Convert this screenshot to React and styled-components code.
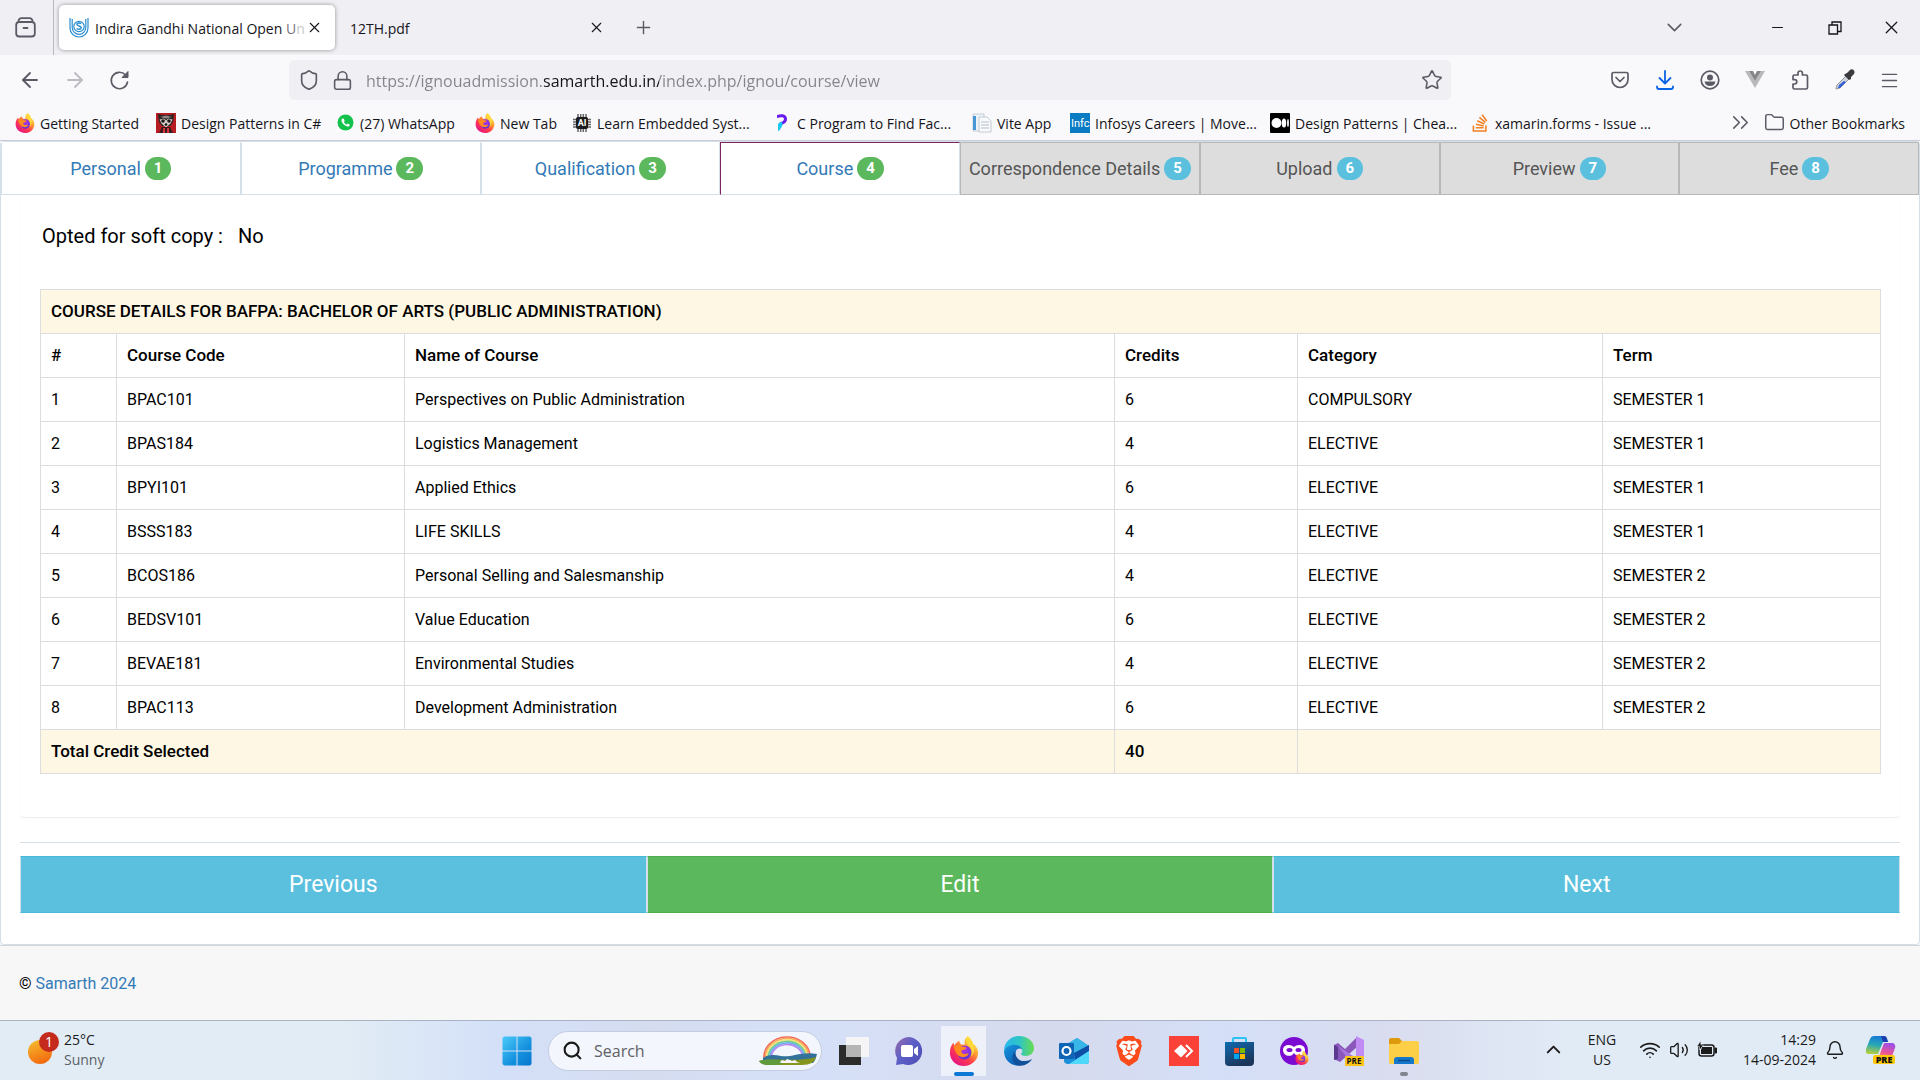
import styled, { createGlobalStyle } from "styled-components";
import {
    ArrowLeft, ArrowRight, Shield, Lock, Star, ChevronDown, ChevronUp, Minus, X, Plus,
    Menu, Folder, ChevronsRight, Search, Wifi, Volume2, Bell
} from "lucide-react";
import { FaStackOverflow } from "react-icons/fa";
import { SiBrave } from "react-icons/si";

const bookmarks = [
    { name: "Getting Started", icon: <FirefoxIcon size={20} />, width: 141 },
    { name: "Design Patterns in C#", icon: <RaccoonIcon />, width: 179 },
    { name: "(27) WhatsApp", icon: <WhatsIcon />, width: 140 },
    { name: "New Tab", icon: <FirefoxIcon size={20} />, width: 97 },
    { name: "Learn Embedded Syst...", icon: <ChipIcon />, width: 200 },
    { name: "C Program to Find Fac...", icon: <ProgramizIcon />, width: 200 },
    { name: "Vite App", icon: <PageIcon />, width: 98 },
    { name: "Infosys Careers | Move...", icon: <InfosysIcon />, width: 200 },
    { name: "Design Patterns | Chea...", icon: <MediumIcon />, width: 200 },
    { name: "xamarin.forms - Issue ...", icon: <FaStackOverflow size={20} color="#f48024" />, width: 200 },
];

const steps = [
    { name: "Personal", done: true },
    { name: "Programme", done: true },
    { name: "Qualification", done: true },
    { name: "Course", done: true, active: true },
    { name: "Correspondence Details" },
    { name: "Upload" },
    { name: "Preview" },
    { name: "Fee" },
];

const courses = [
    ["BPAC101", "Perspectives on Public Administration", 6, "COMPULSORY", "SEMESTER 1"],
    ["BPAS184", "Logistics Management", 4, "ELECTIVE", "SEMESTER 1"],
    ["BPYI101", "Applied Ethics", 6, "ELECTIVE", "SEMESTER 1"],
    ["BSSS183", "LIFE SKILLS", 4, "ELECTIVE", "SEMESTER 1"],
    ["BCOS186", "Personal Selling and Salesmanship", 4, "ELECTIVE", "SEMESTER 2"],
    ["BEDSV101", "Value Education", 6, "ELECTIVE", "SEMESTER 2"],
    ["BEVAE181", "Environmental Studies", 4, "ELECTIVE", "SEMESTER 2"],
    ["BPAC113", "Development Administration", 6, "ELECTIVE", "SEMESTER 2"],
];

export default function App() {
    return (
        <Screen>
            <GlobalStyle />
            <Browser />
            <CoursePage />
            <Taskbar />
        </Screen>
    );
}

function Browser() {
    return (
        <header>
            <TabStrip>
                <IconButton $w={50} aria-label="Recent browsing"><RecentIcon /></IconButton>
                <Divider />
                <Tab $active>
                    <IgnouIcon />
                    <TabTitle>Indira Gandhi National Open <Faded $to="#77767c">U</Faded><Faded $to="#c9c9cc">n</Faded></TabTitle>
                    <IconButton $w={24} $dark aria-label="Close tab"><X size={17} strokeWidth={1.5} /></IconButton>
                </Tab>
                <Tab>
                    <TabTitle>12TH.pdf</TabTitle>
                    <IconButton $w={24} $dark aria-label="Close tab"><X size={17} strokeWidth={1.5} /></IconButton>
                </Tab>
                <IconButton $w={54} aria-label="New tab"><Plus size={21} strokeWidth={1.6} /></IconButton>
                <Spacer />
                <IconButton $w={80} aria-label="List all tabs"><ChevronDown size={25} strokeWidth={1.5} /></IconButton>
                <WindowButtons>
                    <IconButton $w={57} $dark aria-label="Minimize"><Minus size={17} strokeWidth={1.5} /></IconButton>
                    <IconButton $w={57} $dark aria-label="Restore"><RestoreIcon /></IconButton>
                    <IconButton $w={57} $dark aria-label="Close"><X size={21} strokeWidth={1.4} /></IconButton>
                </WindowButtons>
            </TabStrip>

            <NavBar>
                <IconButton $w={45} aria-label="Back"><ArrowLeft size={24} strokeWidth={1.8} /></IconButton>
                <IconButton $w={45} $faded aria-label="Forward"><ArrowRight size={24} strokeWidth={1.8} /></IconButton>
                <IconButton $w={45} aria-label="Reload"><ReloadIcon /></IconButton>
                <UrlBar>
                    <Shield size={22} strokeWidth={1.8} />
                    <Lock size={21} strokeWidth={1.8} />
                    <UrlInput aria-label="Address" defaultValue="https://ignouadmission.samarth.edu.in/index.php/ignou/course/view" />
                    <Star size={22} strokeWidth={1.7} />
                </UrlBar>
                <NavIcons>
                    <IconButton $w={45} aria-label="Save to Pocket"><PocketIcon /></IconButton>
                    <IconButton $w={45} aria-label="Downloads"><DownloadIcon /></IconButton>
                    <IconButton $w={45} aria-label="Account"><AccountIcon /></IconButton>
                    <IconButton $w={45} aria-label="Vue devtools"><VueIcon /></IconButton>
                    <IconButton $w={45} aria-label="Extensions"><PuzzleIcon /></IconButton>
                    <IconButton $w={45} aria-label="Color picker"><DropperIcon /></IconButton>
                    <IconButton $w={45} aria-label="Menu"><Menu size={21} strokeWidth={1.7} /></IconButton>
                </NavIcons>
            </NavBar>

            <BookmarkBar>
                {bookmarks.map((b, i) => (
                    <Bookmark href="#" key={i} $w={b.width}>{b.icon}<span>{b.name}</span></Bookmark>
                ))}
                <Spacer />
                <IconButton $w={46} aria-label="More bookmarks"><ChevronsRight size={27} strokeWidth={1.4} /></IconButton>
                <Bookmark href="#"><Folder size={21} strokeWidth={1.7} /><span>Other Bookmarks</span></Bookmark>
            </BookmarkBar>
        </header>
    );
}

function CoursePage() {
    return (
        <Page>
            <Panel>
                <Steps>
                    {steps.map((s, i) => (
                        <Step href="#" key={s.name} $done={s.done} $active={s.active}>
                            {s.name} <Badge $done={s.done}>{i + 1}</Badge>
                        </Step>
                    ))}
                </Steps>
                <Inner>
                    <Card>
                        <SoftCopy>Opted for soft copy : <span>No</span></SoftCopy>
                        <Table>
                            <colgroup>
                                <Col $w={76} /><Col $w={288} /><Col $w={710} /><Col $w={183} /><Col $w={305} /><Col $w={278} />
                            </colgroup>
                            <thead>
                                <Row $cream>
                                    <th colSpan={6}>COURSE DETAILS FOR BAFPA: BACHELOR OF ARTS (PUBLIC ADMINISTRATION)</th>
                                </Row>
                                <Row>
                                    <th>#</th>
                                    <th>Course Code</th>
                                    <th>Name of Course</th>
                                    <th>Credits</th>
                                    <th>Category</th>
                                    <th>Term</th>
                                </Row>
                            </thead>
                            <tbody>
                                {courses.map((course, i) => (
                                    <Row key={course[0]}>
                                        <td>{i + 1}</td>
                                        {course.map((value, j) => <td key={j}>{value}</td>)}
                                    </Row>
                                ))}
                            </tbody>
                            <tfoot>
                                <Row $cream>
                                    <th colSpan={3}>Total Credit Selected</th>
                                    <th>40</th>
                                    <td colSpan={2}></td>
                                </Row>
                            </tfoot>
                        </Table>
                    </Card>
                    <Actions>
                        <Action>Previous</Action>
                        <Action $green>Edit</Action>
                        <Action>Next</Action>
                    </Actions>
                </Inner>
            </Panel>
            <Footer>© <a href="#">Samarth 2024</a></Footer>
        </Page>
    );
}

function Taskbar() {
    return (
        <Bar>
            <Weather>
                <WeatherIcon />
                <div>
                    <p>25°C</p>
                    <Muted>Sunny</Muted>
                </div>
            </Weather>
            <Apps>
                <AppButton aria-label="Start"><WindowsIcon /></AppButton>
                <SearchBox>
                    <Search size={21} strokeWidth={2.4} />
                    <input aria-label="Search" placeholder="Search" />
                    <RainbowIcon />
                </SearchBox>
                <AppButton aria-label="Task view"><TaskViewIcon /></AppButton>
                <AppButton aria-label="Chat"><ChatIcon /></AppButton>
                <AppButton aria-label="Firefox" $open><FirefoxIcon size={30} /></AppButton>
                <AppButton aria-label="Edge"><EdgeIcon /></AppButton>
                <AppButton aria-label="Outlook"><OutlookIcon /></AppButton>
                <AppButton aria-label="Brave"><BraveIcon /></AppButton>
                <AppButton aria-label="AnyDesk"><AnyDeskIcon /></AppButton>
                <AppButton aria-label="Store"><StoreIcon /></AppButton>
                <AppButton aria-label="Private browsing"><PrivateIcon /></AppButton>
                <AppButton aria-label="Visual Studio"><StudioIcon /></AppButton>
                <AppButton aria-label="File Explorer" $running><ExplorerIcon /></AppButton>
            </Apps>
            <Tray>
                <ChevronUp size={23} strokeWidth={2} />
                <Language>ENG<br />US</Language>
                <TrayIcons>
                    <Wifi size={22} strokeWidth={1.8} />
                    <Volume2 size={20} strokeWidth={1.6} />
                    <BatteryIcon />
                </TrayIcons>
                <Clock>14:29<br />14-09-2024</Clock>
                <Bell size={20} strokeWidth={1.7} />
                <CopilotIcon />
            </Tray>
        </Bar>
    );
}

/* ---------- icons ---------- */

function FirefoxIcon({ size }) {
    return (
        <svg width={size} height={size} viewBox="0 0 32 32">
            <defs>
                <linearGradient id="ffBody" x1="0.85" y1="0.1" x2="0.2" y2="0.95">
                    <stop offset="0" stopColor="#fff44f" />
                    <stop offset="0.35" stopColor="#ff9a2e" />
                    <stop offset="0.65" stopColor="#ff3750" />
                    <stop offset="1" stopColor="#e31587" />
                </linearGradient>
                <radialGradient id="ffGlobe" cx="0.5" cy="0.3" r="0.7">
                    <stop offset="0" stopColor="#b833e1" />
                    <stop offset="1" stopColor="#5b36d6" />
                </radialGradient>
            </defs>
            <path d="M20 0c3 2 5 5 5.500 8 4 3 6 7 5.500 11-.5 7-7 13-15 13S1 26 1 18c0-4 1-8 4-11 0 1 .3 2 1 3 1-2 3-4 5-5 0 2 1 3 2 4l4 0c-1-3 0-7 3-9z" fill="url(#ffBody)" />
            <circle cx="16.500" cy="17.500" r="7.500" fill="url(#ffGlobe)" />
            <path d="M5 11c3-2 6-2 8 0l5 1c1 2-2 3-4 3-1 1-1 3 1 4 2 1 4-1 6 0-2 4-8 5-12 1-2-2-3-5-4-9z" fill="#ff8a1f" />
            <path d="M20 1c-3 3-2 6 1 9 4 4 4 8 2 12 4-3 5-9 2.500-14C24 5 21 4 20 1z" fill="#ffd93b" />
        </svg>
    );
}

function RecentIcon() {
    return (
        <svg width="21" height="21" viewBox="0 0 21 21" fill="none" stroke="currentColor" strokeWidth="1.8" strokeLinecap="round">
            <path d="M3.500 3.500C4 2 5 1.200 6.500 1.200h8c1.500 0 2.500.8 3 2.300" />
            <rect x="1.200" y="5" width="18.600" height="14.500" rx="3" />
            <path d="M8.500 11h4" />
        </svg>
    );
}

function RestoreIcon() {
    return (
        <svg width="14" height="14" viewBox="0 0 14 14" fill="none" stroke="currentColor" strokeWidth="1.300">
            <path d="M1 4h8.500v9H1zM4 4V1h9v9.500H9.500" />
        </svg>
    );
}

function ReloadIcon() {
    return (
        <svg width="21" height="21" viewBox="0 0 21 21">
            <path d="M18.500 12A8.200 8.200 0 1 1 16.500 5" fill="none" stroke="currentColor" strokeWidth="1.600" strokeLinecap="round" />
            <path d="M19 1.500v6h-6z" fill="currentColor" stroke="currentColor" strokeWidth="1" strokeLinejoin="round" />
        </svg>
    );
}

function IgnouIcon() {
    return (
        <svg width="20" height="20" viewBox="0 0 20 20" fill="none" stroke="#2b8fd0" strokeWidth="1.200">
            <path d="M1 0v10a9 9 0 0 0 18 0V0" />
            <path d="M3.200 1v8.500a6.800 6.800 0 0 0 13.600 0V1" />
            <circle cx="10" cy="8.500" r="5.200" />
            <path d="M12.200 5.500c-2-1.200-4.600-.5-4.200 1.200s4.200.8 4.200 2.800-2.600 2.400-4.700 1" strokeWidth="1.500" />
        </svg>
    );
}

function RaccoonIcon() {
    return (
        <svg width="20" height="20" viewBox="0 0 20 20">
            <path d="M0 0h20v20H0z" fill="#b51d22" />
            <path d="M2 1l4 1h8l4-1-1 8-3 4H6L3 9z" fill="#2a2324" />
            <path d="M4 4l6-1.500L16 4l-6 1.500z" fill="#8f8583" />
            <path d="M3.500 6.500l4.500-1 2 2 2-2 4.500 1-2 4-4.500 4-4.500-4z" fill="#d9cfca" />
            <circle cx="7" cy="8" r="1.800" fill="#1c1618" /><circle cx="13" cy="8" r="1.800" fill="#1c1618" />
            <circle cx="10" cy="11.500" r="1.300" fill="#111" />
            <path d="M3 20l3-6h8l3 6z" fill="#3a1b1d" /><path d="M7 15h2v5H7zM11 15h2v5h-2z" fill="#d8323a" />
        </svg>
    );
}

function WhatsIcon() {
    return (
        <svg width="20" height="20" viewBox="0 0 20 20">
            <path d="M1 19l1.500-5A8.500 8.500 0 1 1 6 17.500z" fill="#fff" />
            <circle cx="10.500" cy="9.500" r="8" fill="#12c24c" />
            <path d="M7.300 5.500c-1.500 1-.8 4 1.500 6s5 2.800 5.700 1.200l.3-1-2.100-1.200-1 1.100c-1.300-.5-2.200-1.400-2.800-2.600l.8-1-.9-2.300z" fill="#fff" />
        </svg>
    );
}

function ChipIcon() {
    return (
        <svg width="20" height="20" viewBox="0 0 20 20">
            <path d="M6 1v18M8.700 1v18M11.300 1v18M14 1v18M1 6.500h18M1 9h18M1 11.500h18M1 14h18" stroke="#666" strokeWidth="1.500" />
            <rect x="4" y="4" width="12" height="12" rx="2" fill="#1b1b1b" />
            <text x="10" y="13" fontFamily="Roboto" fontWeight="700" fontSize="9" fill="#fff" textAnchor="middle">AI</text>
        </svg>
    );
}

function ProgramizIcon() {
    return (
        <svg width="20" height="20" viewBox="0 0 20 20">
            <path d="M5 2c6-2 10 0 10 4s-4 6-8 6l1-3c2 0 4-1 4-3S9 4 5 5z" fill="#6a1cf0" />
            <path d="M6 11c2-2 3-2 4-2 1 3 0 4-1 6-1 2-2 3-3 3z" fill="#18c8f4" />
        </svg>
    );
}

function PageIcon() {
    return (
        <svg width="20" height="20" viewBox="0 0 20 20">
            <path d="M1 1h11v17H1z" fill="#eef3f8" stroke="#c4ccd6" />
            <path d="M1 3h3v14H1z" fill="#4797d4" />
            <path d="M7 4h8l4 4v11H7z" fill="#f7f9fb" stroke="#c4ccd6" />
            <path d="M9 9h8M9 12h8M9 15h8" stroke="#b7c0cb" />
        </svg>
    );
}

function InfosysIcon() {
    return (
        <svg width="20" height="20" viewBox="0 0 20 20">
            <path d="M0 0h20v20H0z" fill="#0a7cc4" />
            <text x="1" y="14" fontFamily="Roboto" fontSize="11" fill="#fff">Infc</text>
        </svg>
    );
}

function MediumIcon() {
    return (
        <svg width="20" height="20" viewBox="0 0 20 20">
            <rect width="20" height="20" rx="1" fill="#000" />
            <circle cx="6.500" cy="10" r="5" fill="#fff" />
            <ellipse cx="14" cy="10" rx="2.200" ry="4.500" fill="#fff" />
            <ellipse cx="18" cy="10" rx="0.900" ry="4" fill="#fff" />
        </svg>
    );
}

function PocketIcon() {
    return (
        <svg width="20" height="20" viewBox="0 0 20 20" fill="none" stroke="currentColor" strokeWidth="1.700" strokeLinecap="round" strokeLinejoin="round">
            <path d="M3.500 2.500h13c1 0 1.500.6 1.500 1.500v5.500a8 8 0 0 1-16 0V4c0-.9.500-1.500 1.500-1.500z" />
            <path d="M6 7.500l4 4 4-4" />
        </svg>
    );
}

function DownloadIcon() {
    return (
        <svg width="20" height="20" viewBox="0 0 20 20" fill="none" stroke="#0a63e4" strokeWidth="1.800" strokeLinecap="round" strokeLinejoin="round">
            <path d="M10 1v12M4.500 8l5.500 5.500L15.500 8" />
            <path d="M2 16.500v.5c0 1 .8 2 2 2h12c1.200 0 2-1 2-2v-.5" />
        </svg>
    );
}

function AccountIcon() {
    return (
        <svg width="20" height="20" viewBox="0 0 20 20">
            <circle cx="10" cy="10" r="8.800" fill="none" stroke="currentColor" strokeWidth="1.700" />
            <circle cx="10" cy="7.500" r="3" fill="currentColor" />
            <path d="M4.500 11.500h11c-.5 3-2.500 4.500-5.500 4.500s-5-1.500-5.500-4.500z" fill="currentColor" />
        </svg>
    );
}

function VueIcon() {
    return (
        <svg width="20" height="20" viewBox="0 0 20 20">
            <path d="M0 1h4l6 10 6-10h4L10 18z" fill="#b9b9bb" />
            <path d="M4 1h4l2 4 2-4h4l-6 10z" fill="#858588" />
        </svg>
    );
}

function PuzzleIcon() {
    return (
        <svg width="20" height="20" viewBox="0 0 20 20" fill="none" stroke="currentColor" strokeWidth="1.700" strokeLinejoin="round">
            <path d="M8 5V3.200a2.200 2.200 0 0 1 4.400 0V5H16c1 0 1.500.6 1.500 1.500v11c0 1-.5 1.500-1.500 1.500H4.500c-1 0-1.500-.6-1.500-1.500V14h1.600a2.200 2.200 0 0 0 0-4.400H3V6.500C3 5.600 3.500 5 4.500 5z" />
        </svg>
    );
}

function DropperIcon() {
    return (
        <svg width="22" height="22" viewBox="0 0 22 22">
            <path d="M2 20l1-4 9-9 3 3-9 9z" fill="#cfd4dc" stroke="#80838c" strokeWidth="0.800" />
            <path d="M4 19l1-3 5-4 2 1-6 6z" fill="#3561d8" />
            <path d="M11 5l2-1 3-3c2-2 6 1 4 4l-3 3v2l-2 1-5-5z" fill="#3b3a3e" />
        </svg>
    );
}

function WeatherIcon() {
    return (
        <svg width="32" height="36" viewBox="0 0 32 36">
            <defs>
                <linearGradient id="sun" x1="0.200" y1="0" x2="0.600" y2="1">
                    <stop offset="0" stopColor="#f5bb2d" />
                    <stop offset="1" stopColor="#f2680e" />
                </linearGradient>
            </defs>
            <circle cx="12" cy="20" r="12" fill="url(#sun)" />
            <circle cx="21" cy="10" r="10" fill="#c42b1c" />
            <text x="21" y="15" fontFamily="Open Sans" fontSize="14" fill="#fff" textAnchor="middle">1</text>
        </svg>
    );
}

function WindowsIcon() {
    return (
        <svg width="30" height="30" viewBox="0 0 30 30">
            <defs>
                <linearGradient id="win" gradientUnits="userSpaceOnUse" x1="0" y1="0" x2="30" y2="30">
                    <stop offset="0" stopColor="#4ccbfa" />
                    <stop offset="0.600" stopColor="#1491dd" />
                    <stop offset="1" stopColor="#0674cf" />
                </linearGradient>
            </defs>
            <path d="M2 .5h12.500v14H.5V2zM15.500.5H28l1.500 1.500v12.500h-14zM.5 15.500h14v14H2L.5 28zM15.500 15.500h14V28L28 29.500H15.500z" fill="url(#win)" />
        </svg>
    );
}

function RainbowIcon() {
    const colors = ["#f36b5a", "#f9a95c", "#f4e27a", "#6fd08c", "#68b0f0", "#b48af0"];
    return (
        <svg width="58" height="30" viewBox="0 0 58 30">
            {colors.map((c, i) => (
                <path key={c} d={`M${5 + i * 1.5} 22A${23 - i * 1.5} ${20 - i * 1.5} 0 0 1 ${51 - i * 1.5} 20`} fill="none" stroke={c} strokeWidth="1.700" />
            ))}
            <path d="M4 22c6-4 12-3 18-2 10 2 20-5 36-2-1 4-2 7-4 9H4z" fill="#32719a" />
            <path d="M0 25c15-4 36 2 57-4-1 5-6 8-14 8H10c-5 0-8-1-10-4z" fill="#83951c" />
            <path d="M0 25c10-3 18-1 27 1l-8 3h-9c-5 0-8-1-10-4z" fill="#5f9a3d" />
            <path d="M21 26l2-2 3 1 2-2 3 1 2 1 3-1 2 2 3 1H22z" fill="#f6f1fb" />
        </svg>
    );
}

function TaskViewIcon() {
    return (
        <svg width="30" height="30" viewBox="0 0 30 30">
            <path d="M0 9h22v20H0z" fill="#2b2b2b" />
            <path d="M7 1h23v20H7z" fill="#f5f5f5" />
            <path d="M7 9h15v12H7z" fill="#b5b5b5" />
        </svg>
    );
}

function ChatIcon() {
    return (
        <svg width="30" height="30" viewBox="0 0 30 30">
            <defs>
                <linearGradient id="chat" x1="0" y1="0" x2="1" y2="0.800">
                    <stop offset="0" stopColor="#9a6ba8" />
                    <stop offset="0.500" stopColor="#5b5fc7" />
                    <stop offset="1" stopColor="#4f50b8" />
                </linearGradient>
            </defs>
            <path d="M15 1a14 14 0 1 1-6 27l-7 1 1-7A14 14 0 0 1 15 1z" fill="url(#chat)" />
            <rect x="7" y="9" width="12" height="12" rx="2" fill="#fff" />
            <path d="M20 13l4-3v10l-4-3z" fill="#fff" />
        </svg>
    );
}

function EdgeIcon() {
    return (
        <svg width="30" height="30" viewBox="0 0 30 30">
            <defs>
                <linearGradient id="edgeTop" x1="0" y1="0.500" x2="1" y2="0.500">
                    <stop offset="0" stopColor="#2bb8ea" />
                    <stop offset="0.500" stopColor="#2ec4c9" />
                    <stop offset="1" stopColor="#66dc4f" />
                </linearGradient>
                <linearGradient id="edgeSide" x1="0" y1="0" x2="0.600" y2="1">
                    <stop offset="0" stopColor="#1696e0" />
                    <stop offset="1" stopColor="#0b5cb0" />
                </linearGradient>
            </defs>
            <path d="M0 15C0 6 7 0 15 0c9 0 15 6 15 12 0 5-4 8-8 8-3 0-5-1-5-2s2-1 1-4C16 8 5 7 0 15z" fill="url(#edgeTop)" />
            <path d="M0 15c3-7 14-9 18-2-4-2-8 2-7 7 1 4 5 8 9 8-9 5-20-2-20-13z" fill="url(#edgeSide)" />
            <path d="M12 15c-2 5 3 11 9 10 3 0 5-1 7-2-3 5-9 8-15 6-6-3-6-11-1-14z" fill="#11509a" />
        </svg>
    );
}

function OutlookIcon() {
    return (
        <svg width="30" height="30" viewBox="0 0 30 30">
            <path d="M5 10L18 2l12 8v15c0 2-1 3-3 3H9c-2 0-4-1-4-3z" fill="#1d8fd8" />
            <path d="M5 10l13-8 12 8-14 8z" fill="#38b6e8" />
            <path d="M15 17l15-8v6l-14 9z" fill="#0d4ea6" />
            <path d="M10 28l20-13v10c0 2-1 3-3 3z" fill="#50d8fa" />
            <rect x="0" y="7" width="15" height="16" rx="1" fill="#0f64b5" />
            <circle cx="7.500" cy="15" r="4" fill="none" stroke="#fff" strokeWidth="2.200" />
        </svg>
    );
}

function BraveIcon() {
    return (
        <svg width="30" height="30" viewBox="0 0 30 30">
            <path d="M9 3h12l5 4-1 15-10 7-10-7L4 7z" fill="#fff" />
            <SiBrave size={30} color="#fb4b1c" />
        </svg>
    );
}

function AnyDeskIcon() {
    return (
        <svg width="30" height="30" viewBox="0 0 30 30">
            <path d="M0 0h30v30H0z" fill="#fa4238" />
            <path d="M5 15l7-6.500 6.500 6.500-6.500 6.500z" fill="#fff" />
            <path d="M17 9l6 6-6 6" fill="none" stroke="#fff" strokeWidth="2" />
        </svg>
    );
}

function StoreIcon() {
    return (
        <svg width="30" height="30" viewBox="0 0 30 30">
            <defs>
                <linearGradient id="store" x1="0" y1="0" x2="0.500" y2="1">
                    <stop offset="0" stopColor="#0f6bb2" />
                    <stop offset="1" stopColor="#1c3559" />
                </linearGradient>
            </defs>
            <path d="M9 7V3c0-.6.400-1 1-1h11c.6 0 1 .4 1 1v4" fill="none" stroke="#2cc3f2" strokeWidth="2" />
            <path d="M1 6h29v20a4 4 0 0 1-4 4H5a4 4 0 0 1-4-4z" fill="url(#store)" />
            <path d="M10 12h5v5h-5z" fill="#f25022" /><path d="M16 12h5v5h-5z" fill="#7fba00" />
            <path d="M10 18h5v5h-5z" fill="#00a4ef" /><path d="M16 18h5v5h-5z" fill="#ffb900" />
        </svg>
    );
}

function PrivateIcon() {
    return (
        <svg width="30" height="30" viewBox="0 0 30 30">
            <circle cx="15" cy="15" r="14" fill="#7b0bd0" />
            <path d="M4 14c0-6 8-6 11-3 3-3 11-3 11 3s-8 8-11 3c-3 5-11 3-11-3z" fill="#fff" />
            <ellipse cx="10.500" cy="14" rx="3" ry="2" fill="#7b0bd0" /><ellipse cx="19.500" cy="14" rx="3" ry="2" fill="#7b0bd0" />
            <svg x="16" y="15" width="14" height="14"><FirefoxIcon size={14} /></svg>
        </svg>
    );
}

function StudioIcon() {
    return (
        <svg width="30" height="30" viewBox="0 0 30 30">
            <path d="M0 9l4-2 7 6 12-12v10L6 26l-6-3z" fill="#8a57bd" />
            <path d="M0 9l4 2v12l-4 1z" fill="#5c3a92" />
            <path d="M4 10l18 12v8L11 19z" fill="#a878e0" />
            <path d="M22 0l8 4v22h-8z" fill="#c08bf2" />
            <rect x="11" y="20" width="19" height="10" rx="1" fill="#fcc419" />
            <text x="20" y="28" fontFamily="Open Sans" fontWeight="700" fontSize="8" fill="#111" textAnchor="middle">PRE</text>
        </svg>
    );
}

function ExplorerIcon() {
    return (
        <svg width="30" height="30" viewBox="0 0 30 30">
            <path d="M0 4c0-1 .6-2 2-2h8l3 3-2 4H0z" fill="#dd9a0d" />
            <path d="M0 8h10l3-3h15c1 0 2 .8 2 2v19c0 1-1 2-2 2H2c-1 0-2-1-2-2z" fill="#fccf46" />
            <path d="M5 28v-4c0-2 1-3 3-3h14c2 0 3 1 3 3v4z" fill="#1477cb" />
            <path d="M9 24.500h12" stroke="#0b4d8c" strokeWidth="1.500" />
        </svg>
    );
}

function BatteryIcon() {
    return (
        <svg width="21" height="18" viewBox="0 0 21 18">
            <rect x="2" y="4" width="15" height="11" rx="2.500" fill="none" stroke="#1b1b1b" strokeWidth="1.500" />
            <path d="M5 6h10v7H4V9z" fill="#1b1b1b" />
            <path d="M18 7h1.500v5H18z" fill="#1b1b1b" stroke="#1b1b1b" />
            <path d="M3.500 0L0 5.500h2.500V9L6.500 4H4z" fill="#1b1b1b" stroke="#e1ecf6" strokeWidth="0.500" />
        </svg>
    );
}

function CopilotIcon() {
    return (
        <svg width="30" height="30" viewBox="0 0 30 30">
            <defs>
                <linearGradient id="copA" x1="0.500" y1="0" x2="0.300" y2="1">
                    <stop offset="0" stopColor="#1778d8" />
                    <stop offset="0.500" stopColor="#29a8b4" />
                    <stop offset="1" stopColor="#b8cf3a" />
                </linearGradient>
                <linearGradient id="copB" x1="0.600" y1="0" x2="0.300" y2="1">
                    <stop offset="0" stopColor="#9a4ee8" />
                    <stop offset="0.600" stopColor="#ea5597" />
                    <stop offset="1" stopColor="#f79a4c" />
                </linearGradient>
            </defs>
            <path d="M8 1h9c3 0 4 2 5 6h-5l-5 12H3c-3 0-4-2-3-5L4 4c1-2 2-3 4-3z" fill="url(#copA)" />
            <path d="M15 1h3c3 0 3 3 4 6h-5z" fill="#1b3fb0" />
            <path d="M18 8h8c2 0 4 2 3 5l-4 11H12z" fill="url(#copB)" />
            <rect x="7" y="20" width="22" height="9" rx="2" fill="#fdc806" />
            <text x="18" y="28" fontFamily="Open Sans" fontWeight="800" fontSize="9" fill="#111" textAnchor="middle">PRE</text>
        </svg>
    );
}

/* ---------- styles ---------- */

const GlobalStyle = createGlobalStyle`
    * {
        box-sizing: border-box;
    }
    body {
        margin: 0;
        background: #f7f7f7;
        font-family: Roboto, sans-serif;
        color: #000;
    }
    p {
        margin: 0;
    }
    button, input {
        font: inherit;
        border: 0;
        padding: 0;
        background: none;
    }
    svg {
        flex-shrink: 0;
    }
`

const Screen = styled.div`
    display: flex;
    flex-direction: column;
    min-height: 100vh;
`

const Spacer = styled.div`
    flex: 1;
`

const IconButton = styled.button`
    display: flex;
    align-items: center;
    justify-content: center;
    flex-shrink: 0;
    width: ${p => p.$w}px;
    color: ${p => p.$dark ? "#15141a" : p.$faded ? "#bdbcc3" : "#5b5b66"};
`

const TabStrip = styled.div`
    display: flex;
    align-items: center;
    height: 55px;
    background: #f0eff4;
    font-family: "Open Sans", sans-serif;
    font-size: 14px;
`

const Divider = styled.div`
    width: 1px;
    height: 100%;
    background: #bab9c2;
    margin: 0 5px 0 3px;
`

const Tab = styled.div`
    display: flex;
    align-items: center;
    gap: 6px;
    width: 276px;
    height: 45px;
    padding: ${p => p.$active ? "0 9px 0 10px" : "0 3px 0 15px"};
    margin-right: ${p => p.$active ? 0 : 5}px;
    border-radius: 5px;
    color: #15141a;
    background: ${p => p.$active ? "#fff" : "none"};
    box-shadow: ${p => p.$active ? "0 0 4px rgba(0, 0, 0, 0.4)" : "none"};
`

const TabTitle = styled.span`
    flex: 1;
    min-width: 0;
    line-height: 20px;
    padding-top: 2px;
    white-space: nowrap;
`

const Faded = styled.span`
    color: ${p => p.$to};
`

const WindowButtons = styled.div`
    display: flex;
    margin-left: 35px;
`

const NavBar = styled.div`
    display: flex;
    align-items: center;
    height: 50px;
    padding: 0 8px 0 7px;
    background: #f9f9fb;
`

const UrlBar = styled.div`
    display: flex;
    align-items: center;
    gap: 12px;
    flex: 1;
    height: 40px;
    margin: 0 146px 0 147px;
    padding: 0 8px 0 9px;
    border-radius: 5px;
    background: #f0eff4;
    color: #5b5b66;
`

const UrlInput = styled.input`
    flex: 1;
    min-width: 0;
    padding: 2px 0 0 1px;
    font-family: "Open Sans", sans-serif;
    font-size: 16px;
    background: linear-gradient(to right, #84838b 179px, #15141a 179px 294px, #84838b 294px);
    background-clip: text;
    -webkit-text-fill-color: transparent;
`

const NavIcons = styled.div`
    display: flex;
`

const BookmarkBar = styled.div`
    display: flex;
    align-items: center;
    height: 36px;
    padding: 0 15px;
    border-bottom: 1px solid #c9cdd3;
    background: #f9f9fb;
    color: #5b5b66;
`

const Bookmark = styled.a`
    display: flex;
    align-items: center;
    gap: 5px;
    width: ${p => p.$w ? p.$w + "px" : "auto"};
    font-family: "Open Sans", sans-serif;
    font-size: 14px;
    color: inherit;
    white-space: nowrap;
    text-decoration: none;

    span {
        padding-top: 1px;
        color: #15141a;
    }
`

const Page = styled.main`
    flex: 1;
    background: #f7f7f7;
`

const Panel = styled.section`
    border: 1px solid #d3e0ea;
    border-radius: 4px;
    background: #fff;
`

const Steps = styled.nav`
    display: grid;
    grid-template-columns: repeat(8, 1fr);
`

const Step = styled.a`
    display: flex;
    align-items: center;
    justify-content: center;
    gap: 4px;
    height: 53px;
    font-size: 18px;
    line-height: 24px;
    white-space: nowrap;
    text-decoration: none;
    color: ${p => p.$done ? "#337ab7" : "#555"};
    background: ${p => p.$done ? "#fff" : "#ddd"};
    border: 1px solid ${p => p.$done ? "#d3e0ea" : "#b8b8b8"};
    border-top-color: ${p => p.$active ? "#7b2261" : p.$done ? "#fff" : "#b8b8b8"};
    border-left-color: ${p => p.$active ? "#7b2261" : p.$done ? "#d3e0ea" : "#b8b8b8"};
`

const Badge = styled.span`
    padding: 4px 9px;
    border-radius: 12px;
    font-size: 15px;
    font-weight: 700;
    line-height: 15px;
    color: #fff;
    background: ${p => p.$done ? "#5cb85c" : "#5bc0de"};
`

const Inner = styled.div`
    padding: 0 19px 31px;
`

const Card = styled.div`
    padding: 26px 19px 43px 20px;
    border-radius: 4px;
    box-shadow: 0 1px 1px rgba(0, 0, 0, 0.08);
`

const SoftCopy = styled.p`
    padding: 0 2px;
    margin-bottom: 38px;
    font-size: 20px;
    line-height: 30px;

    span {
        margin-left: 10px;
    }
`

const Table = styled.table`
    width: 100%;
    table-layout: fixed;
    border-collapse: collapse;
    font-size: 16px;
    line-height: 23px;

    th, td {
        height: 44px;
        padding: 10px;
        border: 1px solid #ddd;
        text-align: left;
    }
    th {
        font-size: 17px;
        font-weight: 500;
    }
`

const Col = styled.col`
    width: ${p => p.$w / 18.4}%;
`

const Row = styled.tr`
    background: ${p => p.$cream ? "#fdf7e3" : "#fff"};
`

const Actions = styled.div`
    display: grid;
    grid-template-columns: repeat(3, 1fr);
    margin-top: 25px;
    padding-top: 13px;
    border-top: 1px solid #d3e0ea;
`

const Action = styled.button`
    height: 57px;
    font-size: 23px;
    color: #fff;
    background: ${p => p.$green ? "#5cb85c" : "#5bc0de"};
    border: 1px solid ${p => p.$green ? "#4cae4c" : "#46b8da"};
    border-left-color: #d3e0ea;
    border-right-color: #d3e0ea;
`

const Footer = styled.footer`
    padding: 26px 19px 16px;
    border-top: 1px solid #d5d5d5;
    font-size: 16px;
    line-height: 24px;

    a {
        color: #337ab7;
        text-decoration: none;
    }
`

const Bar = styled.footer`
    display: grid;
    grid-template-columns: 1fr auto 1fr;
    align-items: center;
    height: 60px;
    border-top: 1px solid #a9b4c2;
    background: linear-gradient(to right, #e1ecf5 0 18%, #d4e0f8 26%, #d5dcf0 34%, #d5e0f8 42%, #d6daed 55%, #d4dff7 64%, #d9dcef 72%, #e1ebf6 82%);
    font-family: "Open Sans", sans-serif;
    font-size: 14px;
    line-height: 20px;
    color: #1b1b1b;
`

const Weather = styled.div`
    display: flex;
    align-items: center;
    gap: 4px;
    padding: 0 0 2px 28px;
`

const Muted = styled.p`
    color: #5c6268;
`

const Apps = styled.div`
    display: flex;
    align-items: center;
`

const AppButton = styled.button`
    display: flex;
    align-items: center;
    justify-content: center;
    position: relative;
    width: 55px;
    height: 50px;

    /* open window plate and the marker under the icon */
    background: ${p => p.$open ? "rgba(255, 255, 255, 0.6) content-box" : "none"};
    padding: 0 5px;
    border-radius: 5px;

    &::after {
        content: "";
        display: ${p => p.$open || p.$running ? "block" : "none"};
        position: absolute;
        bottom: 0;
        width: ${p => p.$open ? 20 : 8}px;
        height: 4px;
        border-radius: 2px;
        background: ${p => p.$open ? "#0a78d4" : "#80848c"};
    }
`

const SearchBox = styled.label`
    display: flex;
    align-items: center;
    gap: 11px;
    width: 274px;
    height: 40px;
    margin: 0 4px;
    padding: 0 4px 0 13px;
    border: 1px solid #c3cde0;
    border-radius: 20px;
    background: #f3f6fd;

    input {
        flex: 1;
        min-width: 0;
        font-size: 16px;
    }
    input::placeholder {
        color: #5e6066;
    }
`

const Tray = styled.div`
    display: flex;
    align-items: center;
    justify-content: flex-end;
    padding: 0 24px 2px 0;
`

const Language = styled.p`
    width: 74px;
    text-align: center;
`

const TrayIcons = styled.div`
    display: flex;
    align-items: center;
    gap: 8px;
`

const Clock = styled.p`
    width: 98px;
    margin-right: 9px;
    text-align: right;

    & + svg {
        margin-right: 21px;
    }
`
